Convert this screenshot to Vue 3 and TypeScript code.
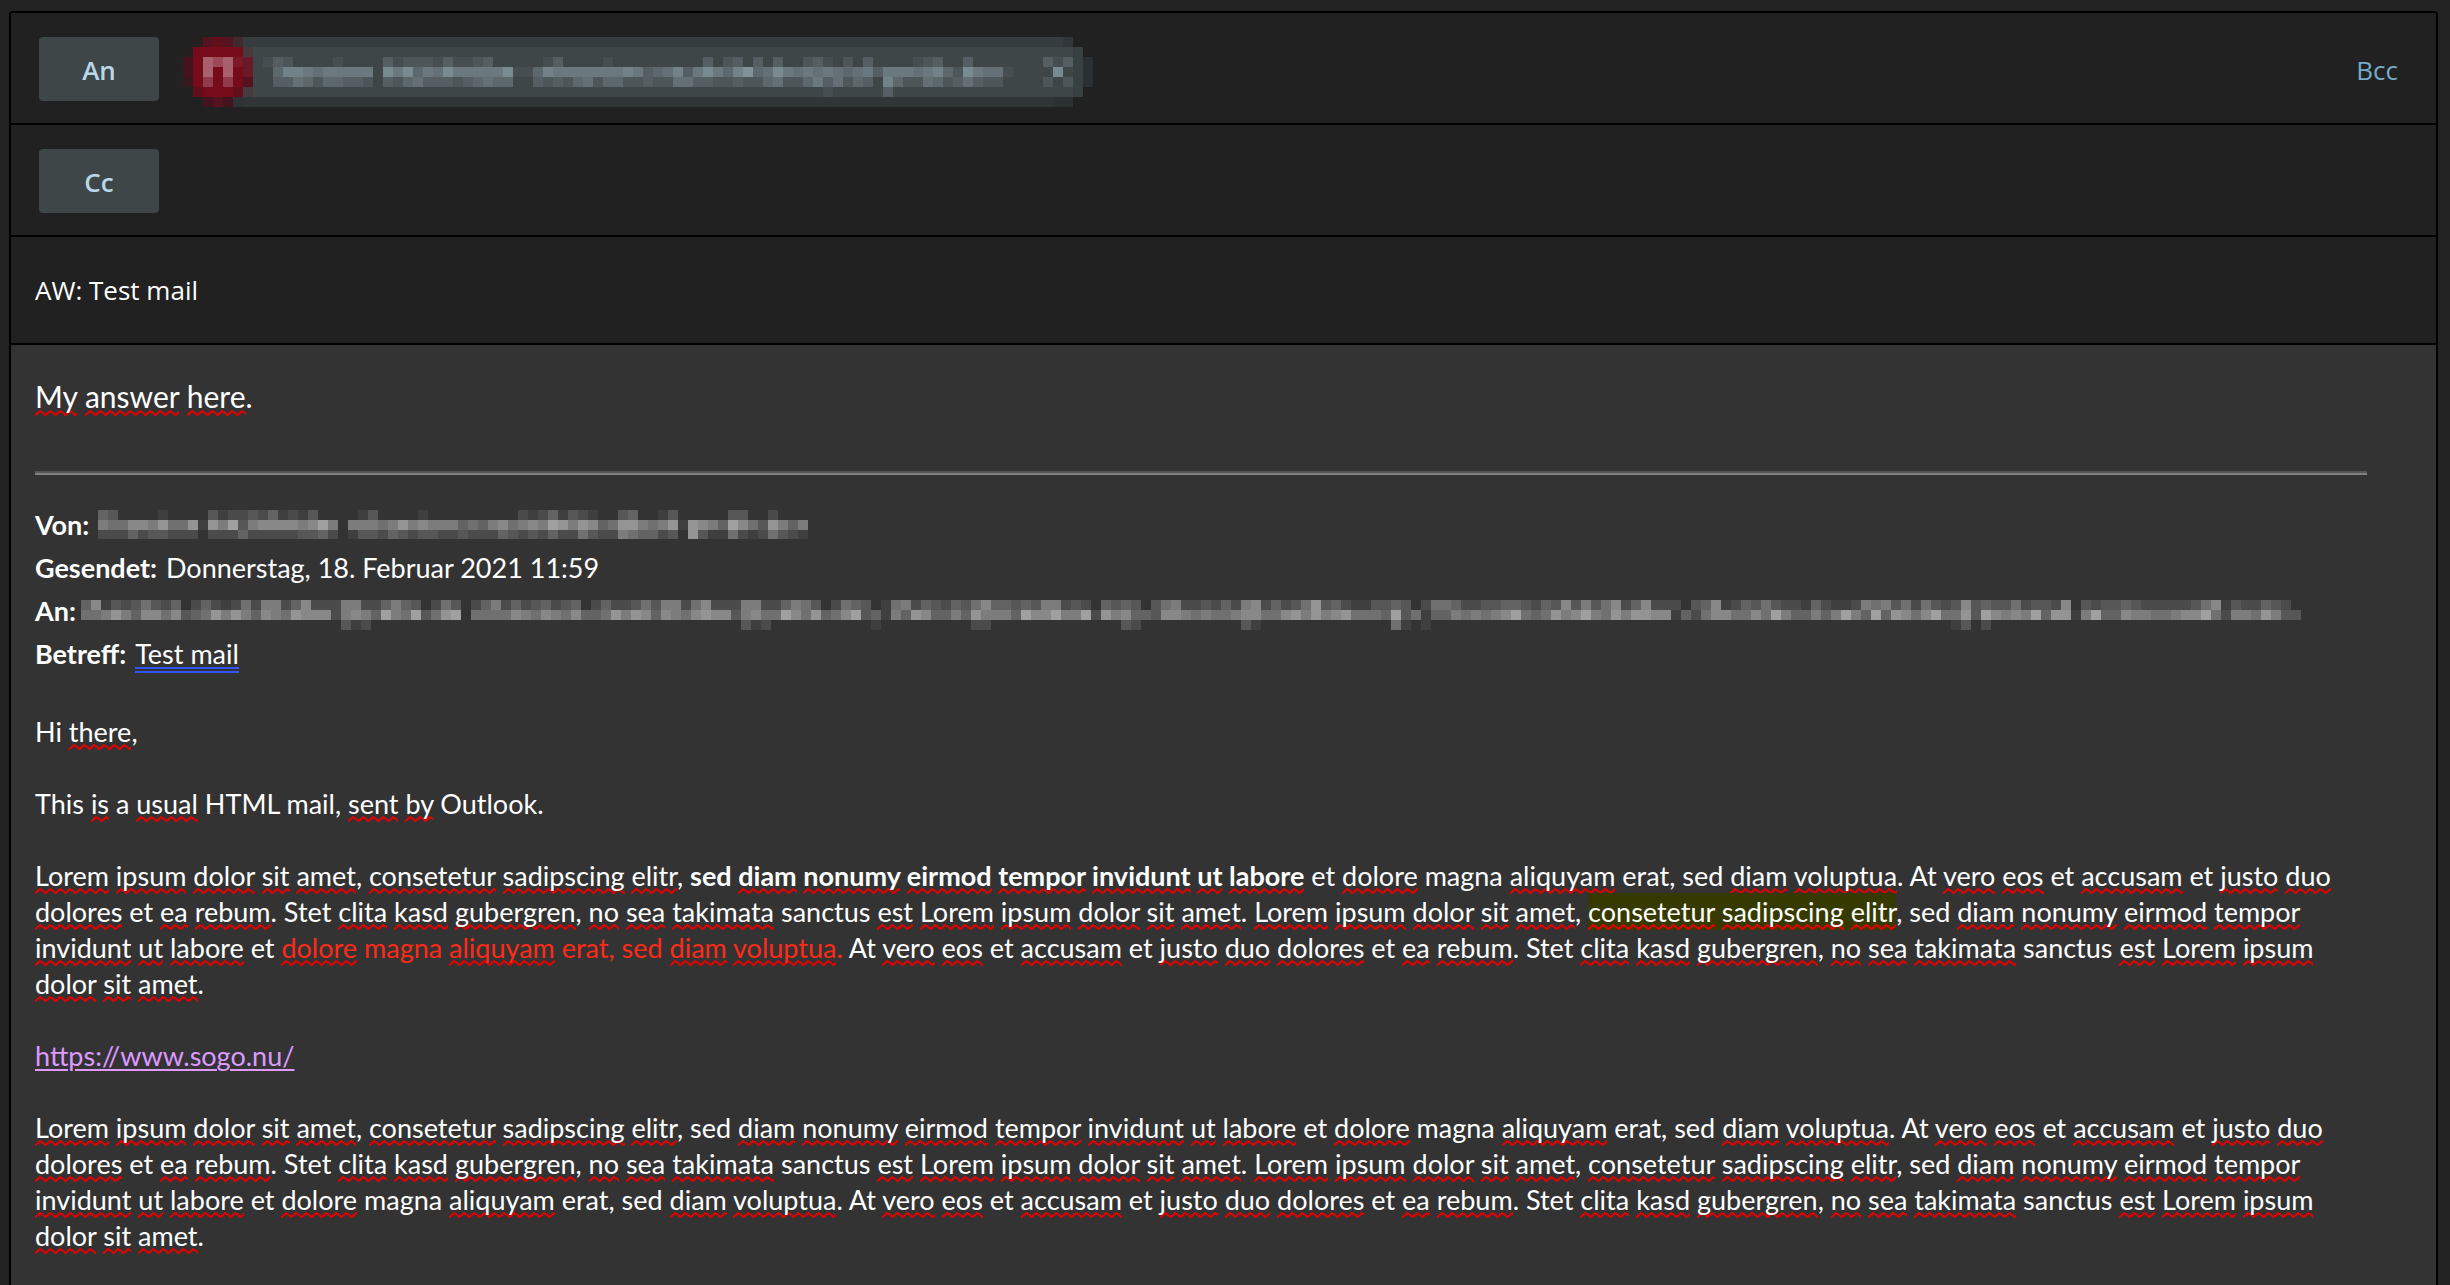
<script setup lang="ts">
import { ref } from 'vue'

interface Cell { x: number; y: number; w: number; fill: string }
interface Run { text: string; kind?: 'strong' | 'alert' | 'mark' }
interface Token { text: string; misspelt: boolean }

const subject = ref('AW: Test mail')
const cc = ref('')

const mix = (from: number[], to: number[], level: number): string =>
  `rgb(${from.map((c, i) => Math.round(c + ((to[i] - c) * level) / 9)).join(',')})`

/* Every digit is one 10px block; the digit is its brightness, 0 is left blank. */
function mosaic(rows: string[], from: number[], to: number[], col = 0, row = 0): Cell[] {
  return rows.flatMap((line, r) =>
    [...line].flatMap((digit, c) =>
      digit === '0' ? [] : [{ x: (c + col) * 10, y: (r + row) * 10, w: 10, fill: mix(from, to, Number(digit)) }],
    ),
  )
}

const grey = [51, 51, 51]
const light = [160, 160, 160]

const sender = mosaic([
  '4300001000' + '0312232412' + '1300001300' + '0010000000' + '0021241321' + '0034001300' + '00033002000',
  '6557768558' + '1869367777' + '6796066656' + '8676664546' + '7567698687' + '4588656818' + '76497538646',
  '2224233222' + '0222422222' + '3342013324' + '3233223222' + '4323242253' + '2265442308' + '31152125321',
], grey, light)

const receivers = mosaic([
  '4713235324' + '0242125266' + '2472226622' + '4643025302' + '4624234234' + '0242235366' + '2572226622' +
  '4653025430' + '1562432435' + '7443436623' + '2043430356' + '2232426724' + '2358342113' + '3430255422' + '3344324373' + '63' +
  '5724722203' + '4712435322' + '1421126563' + '5253237343' + '3523327032' + '3343222223' + '5713224320',
  '5568647757' + '3458686476' + '5877726764' + '9659358905' + '5557657657' + '4458687476' + '5787736755' +
  '9758457934' + '1648744648' + '6664977966' + '9286744377' + '6565567755' + '7868678555' + '4935144656' + '5679545867' + '96' +
  '5868877142' + '5775575964' + '4646964948' + '7579558397' + '6769488169' + '4476655677' + '9526658633',
  '0'.repeat(26) + '312' + '0'.repeat(37) + '312' + '0'.repeat(10) + '1' + '0'.repeat(9) + '22' + '0'.repeat(13) + '32' +
  '0'.repeat(10) + '31' + '0'.repeat(13) + '5101' + '0'.repeat(52) + '1302',
], grey, light)

const chipText = mosaic([
  '1320000100' + '0031222131' + '1230000013' + '0000100000' + '0000302303' + '0300231020' + '3000012300' + '3000000031' + '3',
  '0477656666' + '6086846586' + '6666811476' + '6666667634' + '5736864794' + '5865656545' + '6366656742' + '8655100008' + '0',
  '0335424433' + '2032453332' + '3454400323' + '2452442232' + '2553322322' + '4522463524' + '3074225423' + '5322000020' + '2',
  '0'.repeat(56) + '1' + '0'.repeat(5) + '3',
], [62, 70, 72], [130, 146, 154], 8, 2)

const chipBase: Cell[] = [
  { x: 60, y: 0, w: 820, fill: '#353c3e' }, { x: 880, y: 0, w: 10, fill: '#303639' },
  ...[1, 2, 3, 4, 5].map((r) => ({ x: 60, y: r * 10, w: 830, fill: '#3e4648' })),
  ...[1, 2, 3, 4, 5].map((r) => ({ x: 890, y: r * 10, w: 10, fill: '#394042' })),
  ...[2, 3, 4].map((r) => ({ x: 900, y: r * 10, w: 10, fill: '#2a2f31' })),
  { x: 60, y: 60, w: 810, fill: '#303635' }, { x: 870, y: 60, w: 20, fill: '#2c3132' },
]

const avatarColours: Record<string, string> = {
  a: '#261f20', b: '#36191e', c: '#45131d', d: '#54131e', e: '#620f1b', R: '#760b1a', m: '#40292c',
  n: '#473a3f', L: '#a8606c', l: '#8f3b4b', k: '#9d4a58', p: '#7c1828', q: '#6a1a27', g: '#303132',
}
const avatar: Cell[] = ['.adedm.', 'aRRRRRn', 'cRLkLpq', 'cRLRLRq', 'bRlRlRd', '.eRRRen', '..cdcg.'].flatMap((line, r) =>
  [...line].flatMap((key, c) => (key === '.' ? [] : [{ x: c * 10, y: r * 10, w: 10, fill: avatarColours[key] }])),
)
const chip = [...chipBase, ...chipText, ...avatar]

const known = new Set(['sed', 'et', 'magna', 'erat', 'At', 'Stet', 'sanctus', 'Hi', 'This', 'a', 'HTML', 'mail', 'Outlook'])
const tokens = (text: string): Token[] =>
  (text.match(/[A-Za-z]+|[^A-Za-z]+/g) ?? []).map((part) => ({
    text: part,
    misspelt: /[A-Za-z]/.test(part) && !known.has(part),
  }))

const greeting: Run[][] = [[{ text: 'Hi there,' }]]
const intro: Run[][] = [[{ text: 'This is a usual HTML mail, sent by Outlook.' }]]
const styled: Run[][] = [
  [
    { text: 'Lorem ipsum dolor sit amet, consetetur sadipscing elitr, ' },
    { text: 'sed diam nonumy eirmod tempor invidunt ut labore', kind: 'strong' },
    { text: ' et dolore magna aliquyam erat, sed diam voluptua. At vero eos et accusam et justo duo' },
  ],
  [
    { text: 'dolores et ea rebum. Stet clita kasd gubergren, no sea takimata sanctus est Lorem ipsum dolor sit amet. Lorem ipsum dolor sit amet, ' },
    { text: 'consetetur sadipscing elitr', kind: 'mark' },
    { text: ', sed diam nonumy eirmod tempor' },
  ],
  [
    { text: 'invidunt ut labore et ' },
    { text: 'dolore magna aliquyam erat, sed diam voluptua.', kind: 'alert' },
    { text: ' At vero eos et accusam et justo duo dolores et ea rebum. Stet clita kasd gubergren, no sea takimata sanctus est Lorem ipsum' },
  ],
  [{ text: 'dolor sit amet.' }],
]
const plain: Run[][] = styled.map((line) => [{ text: line.map((run) => run.text).join('') }])
const before = [greeting, intro, styled]
const after = [plain]
</script>

<template>
  <main class="compose">
    <div class="row">
      <button type="button" class="pick">An</button>
      <svg class="chip" width="910" height="70" role="img" aria-label="Recipient" shape-rendering="crispEdges">
        <rect v-for="(c, i) in chip" :key="i" :x="c.x" :y="c.y" :width="c.w" height="10" :fill="c.fill" />
      </svg>
      <button type="button" class="bcc">Bcc</button>
    </div>
    <div class="row">
      <button type="button" class="pick">Cc</button>
      <input v-model="cc" class="field" type="text" aria-label="Cc" />
    </div>
    <div class="row subject">
      <input v-model="subject" class="field" type="text" aria-label="Betreff" />
    </div>

    <article class="body">
      <p class="answer">
        <template v-for="(t, i) in tokens('My answer here.')" :key="i"><span :class="{ typo: t.misspelt }">{{ t.text }}</span></template>
      </p>
      <hr />
      <dl class="meta">
        <div>
          <dt>Von:</dt>
          <dd>
            <svg class="hidden-text" width="710" height="29" role="img" aria-label="Sender" shape-rendering="crispEdges">
              <rect v-for="(c, i) in sender" :key="i" :x="c.x" :y="c.y" :width="c.w" height="10" :fill="c.fill" />
            </svg>
          </dd>
        </div>
        <div>
          <dt>Gesendet:</dt>
          <dd>Donnerstag, 18. Februar 2021 11:59</dd>
        </div>
        <div class="tight">
          <dt>An:</dt>
          <dd>
            <svg class="hidden-text" width="2220" height="30" role="img" aria-label="Recipients" shape-rendering="crispEdges">
              <rect v-for="(c, i) in receivers" :key="i" :x="c.x" :y="c.y" :width="c.w" height="10" :fill="c.fill" />
            </svg>
          </dd>
        </div>
        <div>
          <dt>Betreff:</dt>
          <dd><span class="grammar">Test mail</span></dd>
        </div>
      </dl>

      <p v-for="(para, p) in before" :key="'b' + p" class="text">
        <span v-for="(line, l) in para" :key="l" class="line"><span v-for="(run, r) in line" :key="r" :class="run.kind"><span v-for="(t, i) in tokens(run.text)" :key="i" :class="{ typo: t.misspelt }">{{ t.text }}</span></span></span>
      </p>
      <p class="text"><a href="https://www.sogo.nu/">https://www.sogo.nu/</a></p>
      <p v-for="(para, p) in after" :key="'a' + p" class="text">
        <span v-for="(line, l) in para" :key="l" class="line"><span v-for="(run, r) in line" :key="r" :class="run.kind"><span v-for="(t, i) in tokens(run.text)" :key="i" :class="{ typo: t.misspelt }">{{ t.text }}</span></span></span>
      </p>
    </article>
  </main>
</template>

<style>
html, body { height: 100%; }
body { margin: 0; background: #222; overflow: hidden; }
#app { display: flex; flex-direction: column; box-sizing: border-box; height: 100%; padding: 11px 12px 0 9px; }
</style>

<style scoped>
.compose {
  flex: 1;
  display: flex;
  flex-direction: column;
  border: 2px solid #000;
  border-bottom: 0;
  border-radius: 4px 4px 0 0;
  color: #fff;
  font-family: "Open Sans", "Noto Sans", sans-serif;
  font-size: 26px;
}
.row {
  flex: none;
  display: flex;
  align-items: flex-start;
  gap: 24px;
  height: 86px;
  padding: 24px 38px 0 28px;
  border-bottom: 2px solid #000;
  background: #212121;
}
.row.subject { align-items: center; height: 106px; padding: 0 24px; }
button { border: 0; padding: 2px 0 0; font: inherit; cursor: pointer; }
.pick {
  flex: none;
  width: 120px;
  height: 64px;
  border-radius: 4px;
  background: #3e4648;
  color: #b9d7e8;
  font-weight: 600;
}
.chip { flex: none; display: block; }
.bcc { margin-left: auto; height: 64px; background: none; color: #74acc8; }
.field {
  flex: 1;
  min-width: 0;
  height: 64px;
  padding: 0;
  border: 0;
  outline: 0;
  background: none;
  color: inherit;
  font: inherit;
}
.body {
  flex: 1;
  padding: 31px 21px 0 24px;
  background: #333;
  font-family: Lato, sans-serif;
  font-size: 27px;
  line-height: 36px;
}
p { margin: 0; }
.answer { font-size: 30px; line-height: 40px; }
hr {
  width: 98%;
  height: 2px;
  margin: 55px 0 28px;
  border: 0;
  border-bottom: 2px solid #808080;
  background: #555;
}
.meta { margin: 0 0 39px; line-height: 43px; }
.meta div { display: flex; gap: 9px; height: 43px; }
.meta .tight { gap: 5px; }
.meta dt { font-weight: 700; }
.meta dd { margin: 0; white-space: nowrap; }
.hidden-text { display: block; margin-top: 7px; }
.tight .hidden-text { margin-top: 11px; }
.grammar {
  padding-bottom: 3px;
  background: linear-gradient(#3355ff 2px, transparent 2px, transparent 4px, #3355ff 4px) left bottom / 100% 6px no-repeat;
}
.text { margin-bottom: 36px; }
.line { display: block; white-space: nowrap; }
.strong { font-weight: 700; }
.alert { color: #ff2a17; }
.mark { padding: 2px 0; background: #373a00; }
.typo {
  padding-bottom: 2px;
  background: url("data:image/svg+xml,%3Csvg xmlns='http://www.w3.org/2000/svg' width='10' height='6'%3E%3Cpath d='M-5 1Q-3 1 -2 3T0 5T3 3T5 1T8 3T10 5T13 3' fill='none' stroke='%23e60000' stroke-width='2'/%3E%3C/svg%3E") repeat-x left bottom;
}
a { color: #dd99ff; text-decoration-thickness: 2px; text-underline-offset: 3px; }
</style>
